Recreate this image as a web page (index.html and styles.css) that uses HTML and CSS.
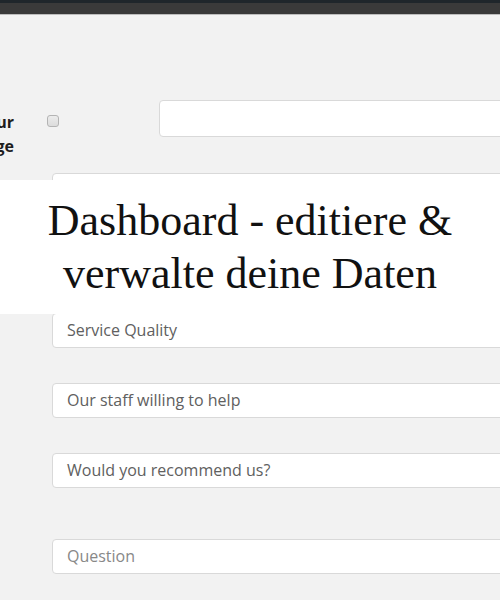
FILE: index.html
```html
<!DOCTYPE html>
<html lang="de">
<head>
<meta charset="utf-8">
<title>Dashboard</title>
<link rel="stylesheet" href="styles.css">
</head>
<body>
<header class="topbar"></header>
<main class="form">
  <div class="row-image">
    <label class="img-label">Your<br>Image</label>
    <span class="check"></span>
    <div class="field field-wide"></div>
  </div>
  <div class="questions">
    <div class="field">Overall Experience</div>
    <div class="field">Food Quality</div>
    <div class="field">Service Quality</div>
    <div class="field">Our staff willing to help</div>
    <div class="field">Would you recommend us?</div>
    <div class="field field-new placeholder">Question</div>
  </div>
</main>
<div class="banner">Dashboard - editiere &amp;<br>verwalte deine Daten</div>
</body>
</html>
```
FILE: styles.css
```css
html, body {
  margin: 0;
  padding: 0;
  overflow: hidden;
  height: 600px;
}
body {
  background: #f2f2f2;
  font-family: "Open Sans", "Liberation Sans", sans-serif;
  width: 500px;
}
.topbar {
  box-sizing: border-box;
  height: 15px;
  background: #3a3a3a;
  border-top: 3px solid #1f262b;
  border-bottom: 1px solid #bdbdbd;
}
.form {
  padding-top: 85px;
}
.row-image {
  display: flex;
  align-items: flex-start;
  height: 37px;
}
.img-label {
  flex: 0 0 auto;
  width: 60px;
  margin-left: -46px;
  margin-top: 10px;
  text-align: right;
  font-weight: 700;
  font-size: 16px;
  line-height: 24px;
  color: #1e1e1e;
}
.check {
  flex: 0 0 auto;
  box-sizing: border-box;
  width: 12px;
  height: 12px;
  margin-left: 33px;
  margin-top: 15px;
  border: 1px solid #b4b4b4;
  border-radius: 3px;
  background: linear-gradient(#ececec, #dcdcdc);
}
.field {
  box-sizing: border-box;
  flex: 0 0 auto;
  width: 500px;
  height: 35px;
  padding: 0 14px;
  background: #fff;
  border: 1px solid #d9d9d9;
  border-radius: 4px;
  font-size: 16px;
  line-height: 33px;
  color: #606060;
  white-space: nowrap;
}
.field-wide {
  width: 420px;
  height: 37px;
  margin-left: 100px;
}
.questions {
  display: flex;
  flex-direction: column;
  gap: 35px;
  padding-left: 52px;
  margin-top: 36px;
}
.field-new {
  margin-top: 16px;
}
.placeholder {
  color: #888;
}
.banner {
  position: absolute;
  top: 180px;
  left: 0;
  right: 0;
  box-sizing: border-box;
  height: 134px;
  padding-top: 14px;
  background: #fff;
  text-align: center;
  font-family: "Liberation Serif", "Times New Roman", serif;
  font-size: 44px;
  line-height: 53px;
  color: #111;
}
```
